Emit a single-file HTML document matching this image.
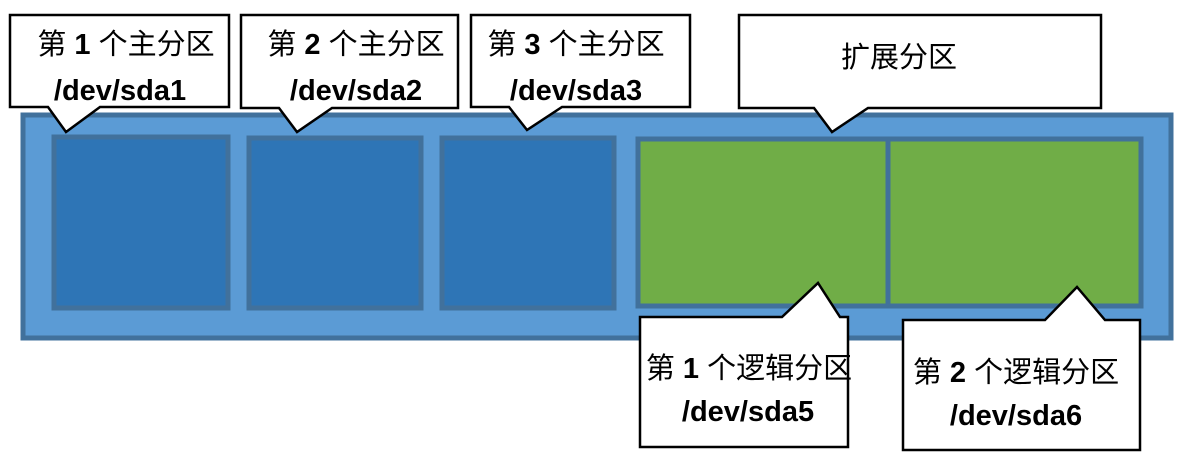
<!DOCTYPE html>
<html><head><meta charset="utf-8"><style>
html,body{margin:0;padding:0;background:#fff;width:1188px;height:458px;overflow:hidden}
svg{display:block}
text{font-family:"Liberation Sans","Noto Sans CJK SC",sans-serif;font-size:29px;fill:#000}
.b{font-weight:bold}
</style></head><body>
<svg width="1188" height="458" viewBox="0 0 1188 458">
<rect x="23" y="115" width="1148" height="223" fill="#5b9bd5" stroke="#41719c" stroke-width="5"/>
<g fill="#2e75b6" stroke="#41719c" stroke-width="5">
<rect x="54" y="137" width="174" height="171"/>
<rect x="249" y="138" width="172" height="170"/>
<rect x="442" y="138" width="172" height="170"/>
</g>
<g fill="#70ad47" stroke="#41719c" stroke-width="5">
<rect x="638" y="139" width="250" height="167"/>
<rect x="888" y="139" width="253" height="167"/>
</g>
<g fill="#fff" stroke="#000" stroke-width="2.5" stroke-linejoin="miter">
<path d="M10,15 H229 V107 H100 L66,132 L48,107 H10 Z"/>
<path d="M241,15 H458 V108 H332 L297,132 L279,108 H241 Z"/>
<path d="M471,15 H690 V107 H562 L527,130 L509,107 H471 Z"/>
<path d="M739,15 H1101 V108 H868 L832,132 L814,108 H739 Z"/>
<path d="M640,317 H782 L818,283 L840,317 H848 V447 H640 Z"/>
<path d="M903,320 H1045 L1077,287 L1105,320 H1140 V450 H903 Z"/>
</g>
<text x="126" y="54" text-anchor="middle">第 <tspan class="b">1</tspan> 个主分区</text>
<text x="120" y="100" text-anchor="middle" class="b">/dev/sda1</text>
<text x="356" y="54" text-anchor="middle">第 <tspan class="b">2</tspan> 个主分区</text>
<text x="356" y="100" text-anchor="middle" class="b">/dev/sda2</text>
<text x="576" y="54" text-anchor="middle">第 <tspan class="b">3</tspan> 个主分区</text>
<text x="576" y="100" text-anchor="middle" class="b">/dev/sda3</text>
<text x="899" y="67" text-anchor="middle">扩展分区</text>
<text x="749" y="378" text-anchor="middle">第 <tspan class="b">1</tspan> 个逻辑分区</text>
<text x="748" y="421" text-anchor="middle" class="b">/dev/sda5</text>
<text x="1016" y="382" text-anchor="middle">第 <tspan class="b">2</tspan> 个逻辑分区</text>
<text x="1016" y="425" text-anchor="middle" class="b">/dev/sda6</text>
</svg>
</body></html>
